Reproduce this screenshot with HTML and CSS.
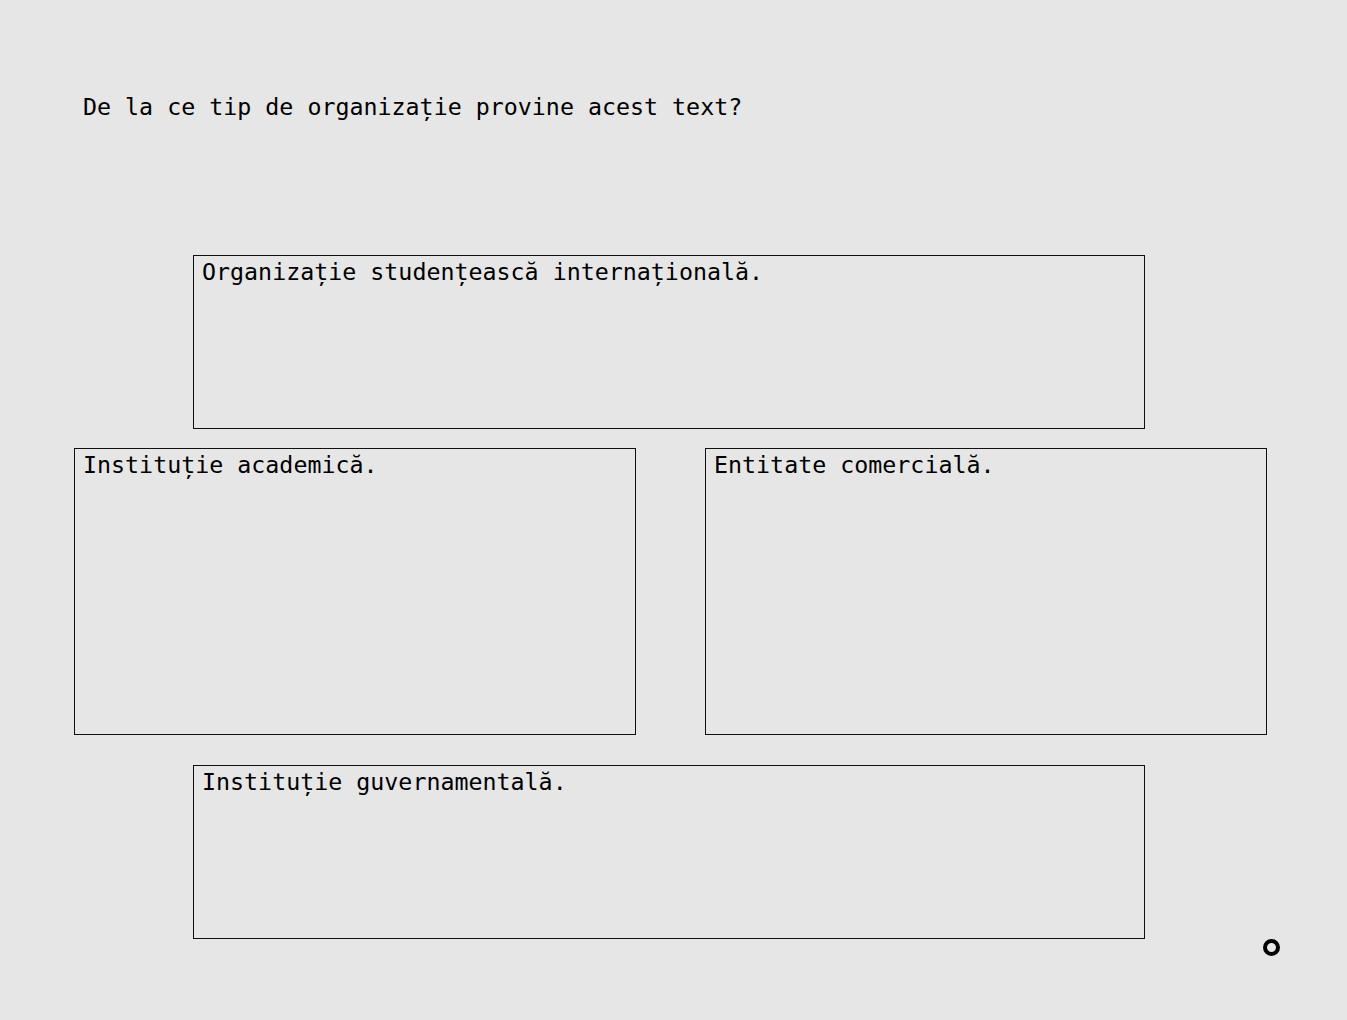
FILE: index.html
```html
<!DOCTYPE html>
<html lang="ro">
  <head>
    <meta charset="UTF-8" />
    <meta name="viewport" content="width=device-width, initial-scale=1.0" />
    <title>Întrebare</title>
    <link rel="stylesheet" href="styles.css">
  </head>
  <body>
    <div class="page">
      <p class="question">De la ce tip de organizație provine acest text?</p>

      <div class="answers">
        <div class="answer answer-wide">Organizație studențească internațională.</div>
        <div class="answer-row">
          <div class="answer answer-tall">Instituție academică.</div>
          <div class="answer answer-tall">Entitate comercială.</div>
        </div>
        <div class="answer answer-wide">Instituție guvernamentală.</div>
      </div>
    </div>
    <div class="marker"></div>
  </body>
</html>
```

FILE: styles.css
```css
* {
  margin: 0;
  padding: 0;
  box-sizing: border-box;
}

html,
body {
  height: 100%;
}

body {
  font-family: "DejaVu Sans Mono", "Liberation Mono", monospace;
  font-size: 23.3px;
  line-height: 30px;
  color: #000;
  background-color: #e6e6e6;
  position: relative;
}

.page {
  padding: 92px 80px 0 74px;
}

.question {
  padding-left: 9px;
}

.answers {
  margin-top: 133px;
  width: 1193px;
}

.answer {
  border: 1px solid #111;
  padding: 1px 8px 0;
  white-space: nowrap;
}

.answer-wide {
  width: 952px;
  height: 174px;
  margin-left: 119px;
}

.answer-row {
  display: flex;
  justify-content: space-between;
  margin: 19px 0 30px;
}

.answer-tall {
  width: 562px;
  height: 287px;
}

.marker {
  position: absolute;
  left: 1263px;
  top: 939px;
  width: 17px;
  height: 17px;
  border: 4px solid #000;
  border-radius: 50%;
}
```
